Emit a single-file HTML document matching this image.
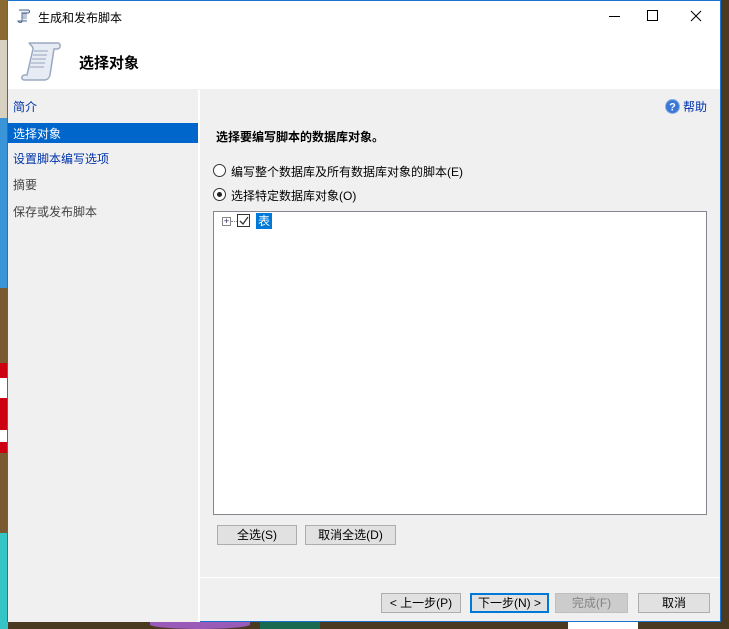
<!DOCTYPE html>
<html><head><meta charset="utf-8"><style>
*{margin:0;padding:0;box-sizing:border-box}
body{width:729px;height:629px;overflow:hidden;background:#4a3a22;position:relative;font-family:"Liberation Sans","Noto Sans CJK SC","WenQuanYi Zen Hei",sans-serif;font-size:12px;color:#000}
.a{position:absolute}
.btn{position:absolute;height:20px;background:#e1e1e1;border:1px solid #adadad;text-align:center;line-height:18px;font-size:12px}
</style></head><body>
<!-- desktop background strips -->
<div class="a" style="left:0;top:0;width:8px;height:40px;background:#8a6a30"></div>
<div class="a" style="left:0;top:40px;width:8px;height:78px;background:#d8d0c0"></div>
<div class="a" style="left:0;top:118px;width:8px;height:170px;background:#3a95d8"></div>
<div class="a" style="left:0;top:288px;width:8px;height:75px;background:#7a5a30"></div>
<div class="a" style="left:0;top:363px;width:8px;height:90px;background:#cc0010"></div>
<div class="a" style="left:0;top:378px;width:8px;height:20px;background:#fff"></div>
<div class="a" style="left:0;top:430px;width:8px;height:12px;background:#fff"></div>
<div class="a" style="left:0;top:453px;width:8px;height:80px;background:#7a5a30"></div>
<div class="a" style="left:0;top:533px;width:8px;height:96px;background:#35c5c5"></div>
<div class="a" style="left:150px;top:620px;width:100px;height:9px;background:#9a5ab8;border-radius:0 0 50% 50%"></div>
<div class="a" style="left:260px;top:620px;width:60px;height:9px;background:#1a6a50"></div>
<div class="a" style="left:568px;top:620px;width:70px;height:9px;background:#fff"></div>
<!-- window -->
<div class="a" style="left:7px;top:0;width:714px;height:622px;border:1px solid #1a73d0;background:#f0f0f0">
 <div class="a" style="left:0;top:0;width:712px;height:88px;background:#fff"></div>
 <!-- title -->
 <svg class="a" style="left:8px;top:7px" width="16" height="16" viewBox="0 0 16 16"><path d="M3 2h9c2 0 2 3 0 3H6v8c0 2-3 2-4 0h9" fill="#e8eef8" stroke="#506890" stroke-width="1"/><path d="M6 6h5M6 8h5M6 10h5" stroke="#8090b0"/></svg>
 <div class="a" style="left:30px;top:8px;font-size:12px">生成和发布脚本</div>
 <div class="a" style="left:601px;top:15px;width:11px;height:1px;background:#000"></div>
 <div class="a" style="left:639px;top:9px;width:11px;height:11px;border:1px solid #000"></div>
 <svg class="a" style="left:682px;top:9px" width="12" height="12"><path d="M1 1L11 11M11 1L1 11" stroke="#000" stroke-width="1"/></svg>
 <!-- header icon -->
 <svg class="a" style="left:12px;top:38px" width="44" height="44" viewBox="0 0 44 44"><path d="M10 4h28c3 0 3 6-1 6h-3l-4 26c-1 4-3 5-6 5H4c-3 0 -3-5 1-5h2l6-26c0-4-6-6-3-6z" fill="#e6ebf4" stroke="#9aa8c0" stroke-width="1.5"/><path d="M14 12h14M13 16h14M12 20h14M11 24h14M10 28h14" stroke="#b0bccf" stroke-width="1.5"/></svg>
 <div class="a" style="left:71px;top:51px;font-size:15px;font-weight:bold">选择对象</div>
 <!-- left nav -->
 <div class="a" style="left:0;top:89px;width:190px;height:532px;background:#f0f0f0"></div>
 <div class="a" style="left:190px;top:89px;width:2px;height:532px;background:#fff"></div>
 <div class="a" style="left:5px;top:97px;color:#0033aa">简介</div>
 <div class="a" style="left:0;top:122px;width:190px;height:20px;background:#0066cc"></div>
 <div class="a" style="left:5px;top:124px;color:#fff">选择对象</div>
 <div class="a" style="left:5px;top:149px;color:#0033aa">设置脚本编写选项</div>
 <div class="a" style="left:5px;top:175px;color:#444">摘要</div>
 <div class="a" style="left:5px;top:202px;color:#444">保存或发布脚本</div>
 <!-- right panel -->
 <svg class="a" style="left:657px;top:98px" width="15" height="15"><circle cx="7.5" cy="7.5" r="7" fill="#3a78d8" stroke="#8fb0e0"/><text x="7.5" y="11.5" font-size="11" font-weight="bold" fill="#fff" text-anchor="middle" font-family="Liberation Sans">?</text></svg>
 <div class="a" style="left:675px;top:97px;color:#0033aa">帮助</div>
 <div class="a" style="left:208px;top:127px;font-weight:bold">选择要编写脚本的数据库对象。</div>
 <div class="a" style="left:205px;top:163px;width:13px;height:13px;border-radius:50%;border:1px solid #333;background:#fff"></div>
 <div class="a" style="left:223px;top:162px">编写整个数据库及所有数据库对象的脚本(E)</div>
 <div class="a" style="left:205px;top:187px;width:13px;height:13px;border-radius:50%;border:1px solid #333;background:#fff"></div>
 <div class="a" style="left:209px;top:191px;width:5px;height:5px;border-radius:50%;background:#222"></div>
 <div class="a" style="left:223px;top:186px">选择特定数据库对象(O)</div>
 <!-- tree box -->
 <div class="a" style="left:205px;top:210px;width:494px;height:304px;background:#fff;border:1px solid #828790"></div>
 <div class="a" style="left:214px;top:216px;width:9px;height:9px;border:1px solid #888;font-size:9px;line-height:7px;text-align:center;color:#226">+</div>
 <div class="a" style="left:223px;top:220px;width:6px;border-top:1px dotted #888"></div>
 <div class="a" style="left:229px;top:213px;width:13px;height:13px;border:1px solid #333;background:#fff"></div>
 <svg class="a" style="left:230px;top:214px" width="11" height="11"><path d="M2 6l3 3 5-7" stroke="#333" fill="none" stroke-width="1.3"/></svg>
 <div class="a" style="left:248px;top:212px;width:16px;height:16px;background:#0078d7;color:#fff;text-align:center;line-height:16px">表</div>
 <div class="btn" style="left:209px;top:524px;width:80px">全选(S)</div>
 <div class="btn" style="left:297px;top:524px;width:91px">取消全选(D)</div>
 <div class="a" style="left:192px;top:576px;width:520px;height:1px;background:#fff"></div>
 <div class="btn" style="left:373px;top:592px;width:80px">&lt; 上一步(P)</div>
 <div class="btn" style="left:462px;top:592px;width:79px;border:2px solid #0078d7;line-height:16px">下一步(N) &gt;</div>
 <div class="btn" style="left:547px;top:592px;width:73px;background:#cccccc;border-color:#bfbfbf;color:#838383">完成(F)</div>
 <div class="btn" style="left:630px;top:592px;width:72px">取消</div>
</div>
</body></html>
